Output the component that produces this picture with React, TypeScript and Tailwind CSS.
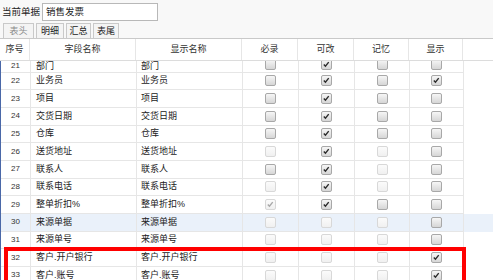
import React from "react";

type S = "n" | "c" | "d" | "dc";

const rows: [number, string, string, S[]][] = [
  [21, "部门", "部门", ["n", "c", "n", "n"]],
  [22, "业务员", "业务员", ["n", "c", "n", "c"]],
  [23, "项目", "项目", ["n", "c", "n", "n"]],
  [24, "交货日期", "交货日期", ["n", "c", "n", "n"]],
  [25, "仓库", "仓库", ["n", "c", "n", "n"]],
  [26, "送货地址", "送货地址", ["d", "c", "d", "n"]],
  [27, "联系人", "联系人", ["n", "c", "d", "n"]],
  [28, "联系电话", "联系电话", ["d", "c", "d", "n"]],
  [29, "整单折扣%", "整单折扣%", ["dc", "c", "n", "n"]],
  [30, "来源单据", "来源单据", ["d", "d", "d", "n"]],
  [31, "来源单号", "来源单号", ["d", "d", "d", "n"]],
  [32, "客户.开户银行", "客户.开户银行", ["d", "d", "d", "c"]],
  [33, "客户.账号", "客户.账号", ["d", "d", "d", "c"]],
];

function Box({ s }: { s: S }) {
  const disabled = s === "d" || s === "dc";
  const checked = s === "c" || s === "dc";
  return (
    <span
      className={
        disabled
          ? "relative shrink-0 inline-block w-[11px] h-[11px] rounded-[2px] border border-[#d8d8d8] bg-gradient-to-b from-[#fbfbfb] to-[#f0f0f0]"
          : "relative shrink-0 inline-block w-[11px] h-[11px] rounded-[2px] border border-[#a8a8a8] bg-gradient-to-b from-[#f6f6f6] to-[#d6d6d6]"
      }
    >
      {checked && (
        <svg viewBox="0 0 11 11" className="absolute left-[0px] top-[0px] w-[9px] h-[9px]">
          <path
            d="M2.2 5.6 L4.2 7.6 L8.2 2.6"
            fill="none"
            stroke={disabled ? "#a8a8a8" : "#2a2a2a"}
            strokeWidth="1.7"
          />
        </svg>
      )}
    </span>
  );
}

const cols = "grid grid-cols-[30px_106px_106px_56px_56px_55px_54px]";
const cell = "border-r border-b border-[#e6e6e6] flex overflow-hidden whitespace-nowrap leading-none";

const tab =
  "h-[15px] border border-b-0 border-[#c9c9c9] bg-[#f4f4f4] flex items-center justify-center text-[9px] leading-none";

export default function App() {
  return (
    <div
      className="relative w-[493px] h-[280px] overflow-hidden bg-white text-[#222]"
      style={{ fontFamily: '"Liberation Sans", "Noto Sans CJK SC", sans-serif' }}
    >
      {/* top bar */}
      <div className="h-[39px] bg-[#f8f8f8] border-b border-[#c9c9c9] flex flex-col">
        <div className="flex items-center h-[23px] pl-[2px]">
          <span className="text-[9.5px] leading-none w-[40px] whitespace-nowrap">当前单据</span>
          <div className="w-[116px] h-[18px] bg-white border border-[#b8b8b8] flex items-center pl-[3px] text-[9.5px] leading-none">
            销售发票
          </div>
        </div>
        <div className="flex items-end gap-[2px] pl-[3px] h-[15px] mt-auto">
          <div className={`${tab} w-[31px] text-[#8a8a8a]`}>表头</div>
          <div className={`${tab} w-[28px]`}>明细</div>
          <div className={`${tab} w-[25px]`}>汇总</div>
          <div className={`${tab} w-[26px]`}>表尾</div>
        </div>
      </div>

      {/* header */}
      <div className={`${cols} h-[22px] border-b border-[#dcdcdc] text-[9px] text-[#333]`}>
        {["序号", "字段名称", "显示名称", "必录", "可改", "记忆", "显示"].map((h) => (
          <div key={h} className="border-r border-[#e6e6e6] flex items-center justify-center">
            {h}
          </div>
        ))}
      </div>

      {/* body */}
      <div className="h-[219px] overflow-hidden border-l border-[#4a68a8]">
        {rows.map(([n, a, b, st]) => {
          const first = n === 21;
          const h = first ? "h-[11.67px]" : "h-[17.67px]";
          const t = first ? "items-start pt-[1px]" : "items-center";
          const c = first ? "items-center pb-[3px]" : "items-center";
          return (
            <div key={n} className={`${cols} ${n === 30 ? "bg-[#eaf1fa]" : ""}`}>
              <div className={`${cell} ${h} ${t} justify-center text-[8px] text-[#333]`}>{n}</div>
              <div className={`${cell} ${h} ${t} pl-[5px] text-[9px]`}>{a}</div>
              <div className={`${cell} ${h} ${t} pl-[4px] text-[9px]`}>{b}</div>
              {st.map((s, i) => (
                <div key={i} className={`${cell} ${h} ${c} justify-center`}>
                  <Box s={s} />
                </div>
              ))}
            </div>
          );
        })}
      </div>

      {/* annotation */}
      <div className="absolute left-[4px] top-[247px] w-[462px] h-[60px] border-[4px] border-[#ff0000]" />
    </div>
  );
}
